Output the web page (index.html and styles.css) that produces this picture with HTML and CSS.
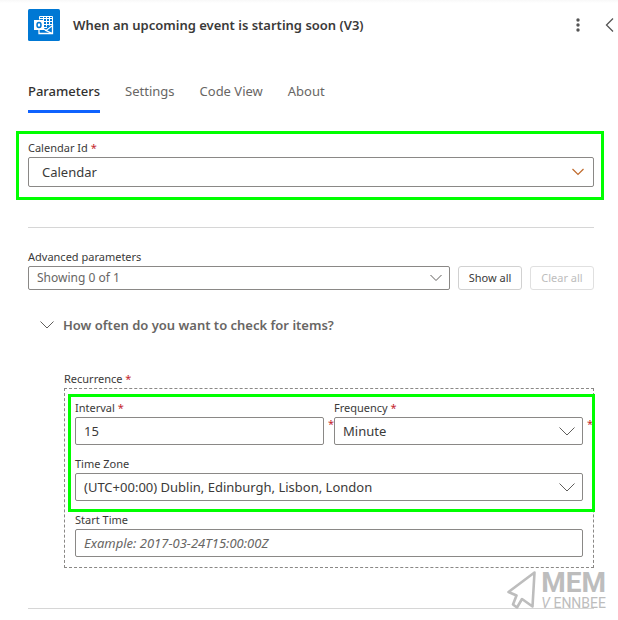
FILE: index.html
```
<!DOCTYPE html>
<html lang="en">
<head>
<meta charset="utf-8">
<title>When an upcoming event is starting soon (V3)</title>
<link rel="stylesheet" href="styles.css">
</head>
<body>
<main class="panel">
  <header class="header">
    <svg class="logo" viewBox="0 0 32 32" aria-hidden="true">
      <rect width="32" height="32" rx="1.500" fill="#0078d4"/>
      <path fill="none" stroke="#fff" stroke-width="1" d="M11.500 10.500v-3h13v10M11.500 9.500h13M15.500 12.500h9M15.500 15.500h9M15.500 7.500v10M18.500 7.500v10M21.500 7.500v9M16 18.500h3"/>
      <path fill="none" stroke="#fff" stroke-width="1.300" d="M11 21v3.500h13.500v-8l-6.500 5 6.500 3M18 21.500l-2-1.500"/>
      <rect x="6" y="11" width="10" height="10" fill="#fff"/>
      <ellipse cx="11" cy="16" rx="2" ry="2.500" fill="none" stroke="#0078d4" stroke-width="1.500"/>
    </svg>
    <h1 class="title">When an upcoming event is starting soon (V3)</h1>
    <button class="icon-button" type="button" aria-label="More">
      <svg width="16" height="16" viewBox="0 0 16 16" fill="#555"><circle cx="8" cy="3" r="1.700"/><circle cx="8" cy="8" r="1.700"/><circle cx="8" cy="13" r="1.700"/></svg>
    </button>
    <button class="icon-button" type="button" aria-label="Collapse">
      <svg width="16" height="16" viewBox="0 0 16 16" fill="none" stroke="#555" stroke-width="1.300"><path d="M11 1.500 4.500 8l6.500 6.500"/></svg>
    </button>
  </header>

  <nav class="tabs">
    <button class="tab tab-active" type="button">Parameters</button>
    <button class="tab" type="button">Settings</button>
    <button class="tab" type="button">Code View</button>
    <button class="tab" type="button">About</button>
  </nav>

  <section class="field highlight highlight-outer">
    <label class="label" for="calendar">Calendar Id <span class="star">*</span></label>
    <div class="select-wrap">
      <select class="control control-tall" id="calendar"><option>Calendar</option></select>
      <svg class="chevron" viewBox="0 0 12 8" width="12" height="8"><path class="warm" d="M.5 1 6 6.500 11.500 1"/></svg>
    </div>
  </section>

  <hr class="divider">

  <section class="advanced">
    <label class="label" for="advanced">Advanced parameters</label>
    <div class="advanced-row">
      <div class="select-wrap">
        <select class="control control-short" id="advanced"><option>Showing 0 of 1</option></select>
        <svg class="chevron chevron-large" viewBox="0 0 12 8" width="12" height="8"><path d="M.5 1 6 6.500 11.500 1"/></svg>
      </div>
      <button class="button" type="button">Show all</button>
      <button class="button" type="button" disabled>Clear all</button>
    </div>
  </section>

  <section class="items">
    <h2 class="items-title">
      <svg viewBox="0 0 14 8" width="14" height="8"><path d="M.5.500 7 7 13.500.500"/></svg>
      How often do you want to check for items?
    </h2>
    <div class="recurrence">
      <div class="label">Recurrence <span class="star">*</span></div>
      <div class="group">
        <div class="group-main highlight highlight-inner">
          <div class="pair">
            <div class="field">
              <label class="label" for="interval">Interval <span class="star">*</span></label>
              <div class="select-wrap required">
                <input class="control" id="interval" type="text" value="15">
              </div>
            </div>
            <div class="field">
              <label class="label" for="frequency">Frequency <span class="star">*</span></label>
              <div class="select-wrap required">
                <select class="control" id="frequency"><option>Minute</option></select>
                <svg class="chevron chevron-large" viewBox="0 0 16 9" width="16" height="9"><path d="M.5.500 8 8 15.500.500"/></svg>
              </div>
            </div>
          </div>
          <div class="field">
            <label class="label" for="zone">Time Zone</label>
            <div class="select-wrap">
              <select class="control" id="zone"><option>(UTC+00:00) Dublin, Edinburgh, Lisbon, London</option></select>
              <svg class="chevron chevron-large" viewBox="0 0 16 9" width="16" height="9"><path d="M.5.500 8 8 15.500.500"/></svg>
            </div>
          </div>
        </div>
        <div class="field">
          <label class="label" for="start">Start Time</label>
          <input class="control" id="start" type="text" placeholder="Example: 2017-03-24T15:00:00Z">
        </div>
      </div>
    </div>
  </section>

  <footer class="footer">
    <hr class="divider">
    <div class="watermark">
      <svg width="32" height="40" viewBox="0 0 32 40" fill="none" stroke="#bdbdbd" stroke-width="2.600" stroke-linejoin="round"><path d="M27.500 2.500 1.500 22l8 3.500-3.500 9 4 3 5-8.500 10.500 7.500Z"/></svg>
      <div class="brand">
        <span class="brand-top">MEM</span>
        <span class="brand-bottom"><i>V</i><span>ENNBEE</span></span>
      </div>
    </div>
  </footer>
</main>
</body>
</html>
```
FILE: styles.css
```
* {
  box-sizing: border-box;
}

body {
  margin: 0;
  background: linear-gradient(#f8f8f8, #fff 3px) no-repeat;
  color: #3b3a39;
  font: 13px/18px "Noto Sans", "Open Sans", sans-serif;
}

button,
input,
select {
  font: inherit;
  color: inherit;
}

.panel {
  padding: 9px 24px 0 28px;
}

.header {
  display: flex;
  align-items: center;
  margin-right: -32px;
}

.logo {
  width: 32px;
  height: 32px;
}

.title {
  flex: 1;
  margin: 0 0 0 13px;
  font-size: 13px;
  font-weight: 600;
}

.icon-button {
  display: flex;
  width: 32px;
  padding: 0 8px;
  border: 0;
  background: none;
}

.tabs {
  display: flex;
  gap: 25px;
  margin-top: 41px;
}

.tab {
  padding: 0 0 10px;
  border: 0;
  border-bottom: 3px solid transparent;
  background: none;
  color: #686664;
}

.tab-active {
  border-color: #0f62fe;
  color: #323130;
  font-weight: 500;
}

.highlight {
  position: relative;
}

.highlight::after {
  content: "";
  position: absolute;
  border: 3px solid #0f0;
  pointer-events: none;
}

.highlight-outer {
  margin-top: 27px;
}

.highlight-outer::after {
  inset: -9px -10px -13px -12px;
}

.highlight-inner::after {
  inset: -6px -12px -11px -7px;
}

.label {
  display: block;
  margin-bottom: 1px;
  font-size: 11px;
  line-height: 16px;
}

.star {
  color: #c4262e;
}

.select-wrap {
  position: relative;
  flex: 1;
}

.control {
  display: block;
  appearance: none;
  width: 100%;
  height: 28px;
  padding: 0 8px;
  border: 1px solid #8a8886;
  border-radius: 2px;
  background: #fff;
}

.control::placeholder {
  color: #686664;
  font-style: italic;
}

.control-tall {
  height: 30px;
  padding: 0 13px;
}

.control-short {
  height: 24px;
  color: #686664;
  font-size: 12px;
}

.chevron {
  position: absolute;
  top: calc(50% - 4px);
  right: 10px;
  pointer-events: none;
}

.chevron-large {
  right: 8px;
}

.chevron path,
.items-title path {
  fill: none;
  stroke: #605e5c;
}

.chevron .warm {
  stroke: #c06a2c;
  stroke-width: 1.2;
}

.required::after {
  content: "*";
  position: absolute;
  top: -1px;
  left: calc(100% + 4px);
  color: #c4262e;
  font-size: 11px;
  line-height: 16px;
}

.divider {
  height: 1px;
  margin: 40px 0 0;
  border: 0;
  background: #d6d6d6;
}

.advanced {
  margin-top: 21px;
}

.advanced-row {
  display: flex;
  gap: 8px;
}

.button {
  width: 64px;
  padding: 0;
  border: 1px solid #d1d1d1;
  border-radius: 3px;
  background: #fff;
  font-size: 11px;
}

.button:disabled {
  border-color: #e0e0e0;
  color: #bdbdbd;
}

.items-title {
  display: flex;
  align-items: center;
  gap: 9px;
  margin: 25px 0 0 12px;
  color: #686664;
  font-size: 13px;
  line-height: 20px;
  font-weight: 600;
}

.recurrence {
  margin: 36px 0 0 36px;
}

.group,
.group-main {
  display: grid;
  gap: 11px;
}

.group {
  padding: 11px 10px 10px;
  border: 1px dashed #8a8886;
}

.pair {
  display: grid;
  grid-template-columns: 1fr 1fr;
  gap: 10px;
}

.footer {
  position: relative;
}

.watermark {
  position: absolute;
  right: -12px;
  bottom: -1px;
  display: flex;
  gap: 2px;
  color: #bdbdbd;
  font-family: Roboto, "Liberation Sans", sans-serif;
  font-weight: 700;
}

.brand {
  display: flex;
  flex-direction: column;
}

.brand-top {
  font-size: 28px;
  line-height: 26px;
}

.brand-bottom {
  display: flex;
  justify-content: space-between;
  font-size: 14px;
  line-height: 14px;
  font-weight: 400;
}
```
